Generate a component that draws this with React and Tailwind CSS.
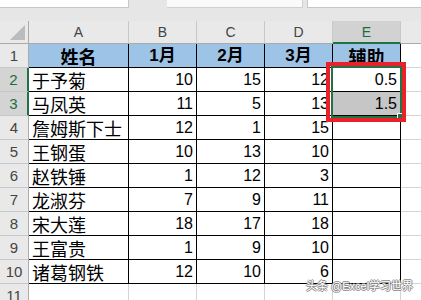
import React from "react";

const rows = [
  ["于予菊", 10, 15, 12, "0.5"],
  ["马凤英", 11, 5, 13, "1.5"],
  ["詹姆斯下士", 12, 1, 15, ""],
  ["王钢蛋", 10, 13, 10, ""],
  ["赵铁锤", 1, 12, 3, ""],
  ["龙淑芬", 7, 9, 11, ""],
  ["宋大莲", 18, 17, 18, ""],
  ["王富贵", 1, 9, 10, ""],
  ["诸葛钢铁", 12, 10, 6, ""],
];

const FONT = "font-['Liberation_Sans','Noto_Sans_CJK_SC',sans-serif]";
const CJK = "font-['Noto_Sans_CJK_SC',sans-serif]";

function RowHeader({ n, selected }) {
  return (
    <div
      className={
        "h-[24px] flex items-center justify-center border-b border-[#c8c8c8] text-[15px] leading-none " +
        (selected
          ? "bg-[#d4d4d4] border-r-2 border-r-[#217346] text-[#1e6b41]"
          : "bg-[#e9e9e9] border-r border-r-[#ababab] text-[#444]")
      }
    >
      {n}
    </div>
  );
}

export default function App() {
  return (
    <div className={"relative w-[421px] h-[300px] overflow-hidden bg-white " + FONT}>
      {/* top strip */}
      <div className="flex h-[8px]">
        <div className="w-[129px] bg-white border-r border-b border-[#c6c6c6]" />
        <div className="w-[38px] bg-[#e6e6e6]" />
        <div className="w-[136px] bg-[#fafafa] border-r border-b border-[#d0d0d0]" />
        <div className="w-[4px] bg-[#e6e6e6]" />
        <div className="flex-1 bg-white border-l border-b border-[#c6c6c6]" />
      </div>
      <div className="h-[13px] bg-[#e6e6e6]" />

      {/* grid */}
      <div className="grid grid-cols-[29px_100px_68px_68px_68px_68px_1fr]">
        {/* column header row */}
        <div className="h-[23px] bg-[#e9e9e9] border-r border-b border-[#ababab] relative">
          <svg className="absolute left-0 top-0" width="29" height="23" viewBox="0 0 29 23">
            <polygon points="25,4 25,19 10,19" fill="#bcbcbc" />
          </svg>
        </div>
        {["A", "B", "C", "D"].map((c) => (
          <div
            key={c}
            className="h-[23px] bg-[#e9e9e9] border-r border-r-[#c8c8c8] border-b border-b-[#ababab] flex items-center justify-center text-[14px] leading-none text-[#444]"
          >
            {c}
          </div>
        ))}
        <div className="h-[23px] bg-[#d2d2d2] border-r border-r-[#c8c8c8] border-b-2 border-b-[#217346] flex items-center justify-center text-[14px] leading-none text-[#1e6b41] pt-[1px]">
          E
        </div>
        <div className="h-[23px] bg-[#e9e9e9] border-b border-[#ababab]" />

        {/* row 1 */}
        <RowHeader n={1} />
        <div className={"h-[24px] bg-[#9dc3e6] border-r border-b border-black flex items-center justify-center text-[18px] font-bold leading-none text-black " + CJK}>
          姓名
        </div>
        {["1月", "2月", "3月"].map((t) => (
          <div
            key={t}
            className="h-[24px] bg-[#9dc3e6] border-r border-b border-black flex items-center justify-center text-[17px] font-bold leading-none text-black"
          >
            {t}
          </div>
        ))}
        <div className={"h-[24px] bg-[#9dc3e6] border-r border-b border-black flex items-center justify-center text-[18px] font-bold leading-none text-black " + CJK}>
          辅助
        </div>
        <div className="h-[24px] border-b border-[#d4d4d4]" />

        {rows.map((r, i) => {
          const n = i + 2;
          return (
            <React.Fragment key={n}>
              <RowHeader n={n} selected={n === 2 || n === 3} />
              <div className={"h-[24px] border-r border-b border-black flex items-center pl-[3px] text-[18px] leading-none text-black whitespace-nowrap " + CJK}>
                {r[0]}
              </div>
              {[r[1], r[2], r[3]].map((v, j) => (
                <div
                  key={j}
                  className="h-[24px] border-r border-b border-black flex items-center justify-end pr-[3px] text-[16px] leading-none text-black"
                >
                  {v}
                </div>
              ))}
              <div
                className={
                  "h-[24px] border-r border-b border-black flex items-center justify-end pr-[3px] text-[16px] leading-none text-black " +
                  (n === 3 ? "bg-[#c6c6c6]" : "bg-white")
                }
              >
                {r[4]}
              </div>
              <div className="h-[24px] border-b border-[#d4d4d4]" />
            </React.Fragment>
          );
        })}

        {/* row 11 */}
        <RowHeader n={11} />
        {[0, 1, 2, 3, 4].map((k) => (
          <div key={k} className="h-[24px] border-r border-b border-[#d4d4d4]" />
        ))}
        <div className="h-[24px] border-b border-[#d4d4d4]" />
      </div>

      {/* selection border */}
      <div className="absolute left-[331px] top-[66px] w-[71px] h-[52px] border-2 border-[#217346]" />
      <div className="absolute left-[397px] top-[113px] w-[7px] h-[7px] bg-[#217346] border border-white" />

      {/* red highlight */}
      <div className="absolute left-[326px] top-[62px] w-[80px] h-[60px] border-4 border-[#e8212b]" />

      {/* watermark */}
      <div className={"absolute left-[306px] top-[281px] text-[11px] leading-none text-white whitespace-nowrap [text-shadow:1px_0_#8a8a8a,-1px_0_#8a8a8a,0_1px_#8a8a8a,0_-1px_#8a8a8a] " + FONT}>
        头条 @Excel学习世界
      </div>
    </div>
  );
}
